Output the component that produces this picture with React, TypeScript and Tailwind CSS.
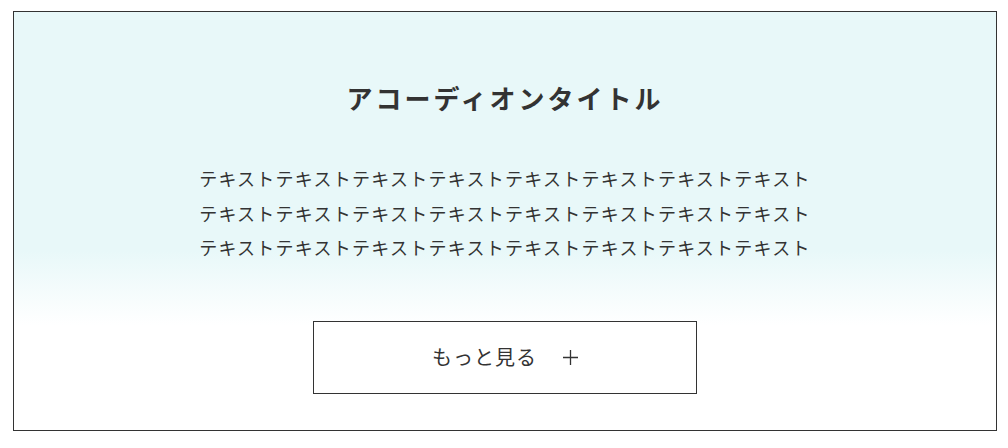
import { useState } from 'react'

const FONT = "font-['Noto_Sans_CJK_JP',_'Noto_Sans',_sans-serif]"

const LINES = [
  'テキストテキストテキストテキストテキストテキストテキストテキスト',
  'テキストテキストテキストテキストテキストテキストテキストテキスト',
  'テキストテキストテキストテキストテキストテキストテキストテキスト',
]

function PlusIcon() {
  return (
    <svg width="15" height="15" viewBox="0 0 15 15" className="shrink-0">
      <path d="M7.5 0v15M0 7.5h15" stroke="#333" strokeWidth="1.3" fill="none" />
    </svg>
  )
}

export default function App() {
  const [open, setOpen] = useState(false)

  return (
    <div className={`${FONT} pt-[11px] pl-[13px] pr-[11px] text-[#333]`}>
      <section className="border border-[#333] bg-[linear-gradient(to_bottom,#e8f8f9_0%,#e8f8f9_57%,#ffffff_75%,#ffffff_100%)] pt-[66px] pb-[36px] flex flex-col items-center">
        <h2 className="text-[26px] leading-[39px] font-bold tracking-[3px] text-center">
          アコーディオンタイトル
        </h2>

        <div className="mt-[44px] text-[18px] leading-[34.5px] tracking-[1.25px] text-center">
          {LINES.map((line, i) => (
            <p key={i}>{line}</p>
          ))}
        </div>

        <button
          type="button"
          onClick={() => setOpen(!open)}
          className="mt-[56px] w-[384px] h-[73px] border border-[#333] bg-white flex items-center justify-center gap-[26px] text-[20px] tracking-[0.05em]"
        >
          <span>もっと見る</span>
          <PlusIcon />
        </button>
      </section>
    </div>
  )
}
